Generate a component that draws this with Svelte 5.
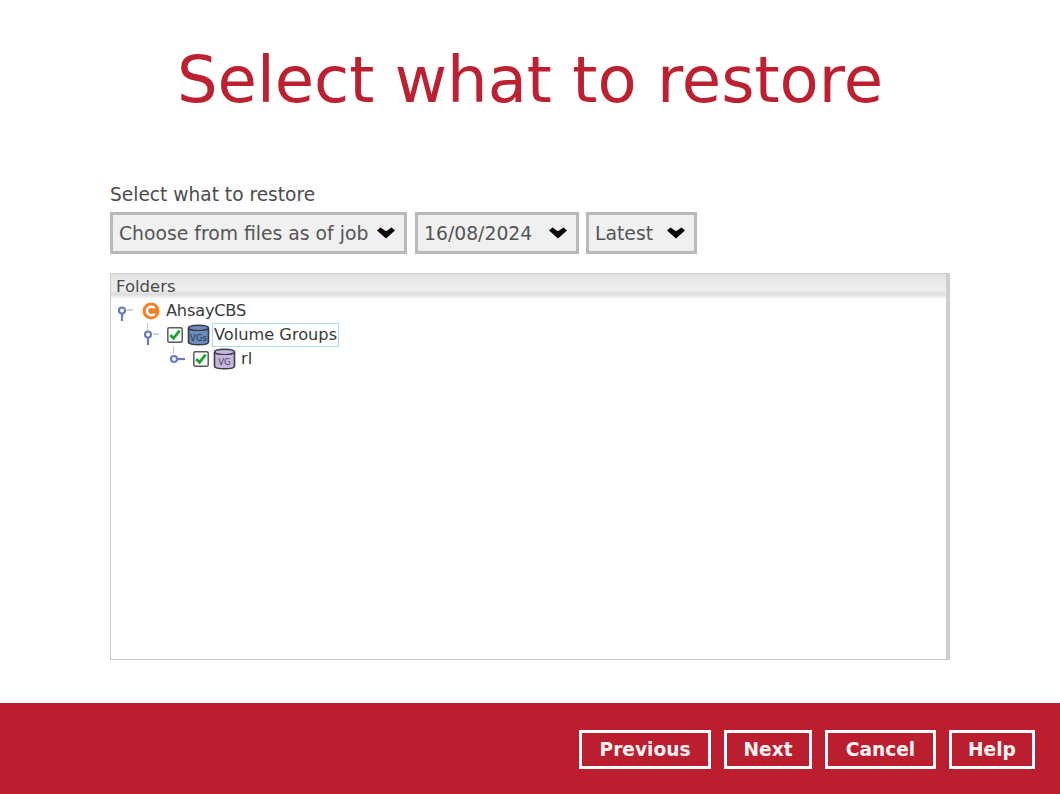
<script>
  const buttons = [
    { label: 'Previous', cls: 'prev' },
    { label: 'Next', cls: 'next' },
    { label: 'Cancel', cls: 'cancel' },
    { label: 'Help', cls: 'help' }
  ];
  const selects = [
    { label: 'Choose from files as of job', cls: 'job' },
    { label: '16/08/2024', cls: 'date' },
    { label: 'Latest', cls: 'latest' }
  ];
</script>

{#snippet pin(kind)}
  <svg class="pin" width="22" height="24" viewBox="0 0 22 24" aria-hidden="true">
    {#if kind !== 'root'}
      <path d="M5.500 -1V7" stroke="#c3c6cf" stroke-width="1.200" fill="none" />
    {/if}
    {#if kind === 'leaf'}
      <path d="M9 12h8" stroke="#6a7cc0" stroke-width="2.200" fill="none" />
      <circle cx="6" cy="12" r="3" fill="#fff" stroke="#6a7cc0" stroke-width="2.200" />
    {:else}
      <path d="M6 14v8" stroke="#6a7cc0" stroke-width="2.200" fill="none" />
      <path d="M11 11h6" stroke="#b9bcc6" stroke-width="1.300" fill="none" />
      <circle cx="6" cy="11.500" r="3" fill="#fff" stroke="#6a7cc0" stroke-width="2.200" />
    {/if}
  </svg>
{/snippet}

{#snippet check()}
  <svg class="check" width="16" height="16" viewBox="0 0 16 16" aria-hidden="true">
    <rect x="0.800" y="0.800" width="14.400" height="14.400" rx="1.500" fill="#fff" stroke="#5a5a5a" stroke-width="1.500" />
    <path d="M3.300 8l3.200 3.400L12.600 3.600" fill="none" stroke="#17a52f" stroke-width="2.800" />
  </svg>
{/snippet}

{#snippet drum(fill, label, ink)}
  <svg class="drum" width="23" height="22" viewBox="0 0 23 22" aria-hidden="true">
    <path d="M1.500 4c0-1.800 4.200-2.800 10-2.800s10 1 10 2.800v14c0 1.800-4.200 2.800-10 2.800s-10-1-10-2.800z" fill={fill} stroke="#3a3a48" stroke-width="1.600" />
    <path d="M1.500 4.500c1.500 1.500 5.200 2 10 2s8.500-.5 10-2" fill="none" stroke="#3a3a48" stroke-width="1.200" />
    <text x="11.500" y="16.500" text-anchor="middle" font-size="8.500" fill={ink}>{label}</text>
  </svg>
{/snippet}

<div class="page">
  <h1>Select what to restore</h1>

  <main class="content">
    <div class="label">Select what to restore</div>
    <div class="selects">
      {#each selects as s}
        <div class="select {s.cls}">
          <span class="value">{s.label}</span>
          <svg class="chevron" width="18" height="12" viewBox="0 0 18 12" aria-hidden="true">
            <path d="M0 3.500L3.500 0.500L9 4.200L14.500 0.500L18 3.500L9 11.500z" fill="#0a0a0a" />
          </svg>
        </div>
      {/each}
    </div>

    <section class="tree">
      <div class="tree-head">Folders</div>
      <div class="rows">
        <div class="row lvl0">
          {@render pin('root')}
          <svg class="brand" width="18" height="18" viewBox="0 0 18 18" aria-hidden="true">
            <circle cx="9" cy="9" r="8.500" fill="#f0822a" />
            <path d="M12.600 6.300a4.300 4.300 0 1 0 0 5.400" fill="none" stroke="#fff" stroke-width="2.400" />
          </svg>
          <span class="name">AhsayCBS</span>
        </div>
        <div class="row lvl1">
          {@render pin('branch')}
          {@render check()}
          {@render drum('#6a8cba', 'VGs', '#1f3150')}
          <span class="name focused">Volume Groups</span>
        </div>
        <div class="row lvl2">
          {@render pin('leaf')}
          {@render check()}
          {@render drum('#c5b7de', 'VG', '#4a4060')}
          <span class="name leaf">rl</span>
        </div>
      </div>
    </section>
  </main>

  <footer class="footer">
    {#each buttons as b}
      <button type="button" class="btn {b.cls}">{b.label}</button>
    {/each}
  </footer>
</div>

<style>
  :global(body) {
    margin: 0;
    background: #fff;
  }

  .page {
    height: 794px;
    display: flex;
    flex-direction: column;
    font-family: 'DejaVu Sans', sans-serif;
    color: #444;
  }

  h1 {
    margin: 0;
    padding-top: 41px;
    height: 144px;
    box-sizing: border-box;
    text-align: center;
    font-size: 64px;
    line-height: 78px;
    font-weight: 400;
    color: #bd2030;
  }

  .content {
    flex: 1;
    padding: 40px 110px 0;
  }

  .label {
    font-size: 18.600px;
    line-height: 22px;
    color: #4c4c4c;
  }

  .selects {
    display: flex;
    gap: 7px;
    margin-top: 6px;
  }

  .select {
    height: 42px;
    box-sizing: border-box;
    border: 3px solid #b9b9b9;
    background: #f0f0f0;
    display: flex;
    align-items: center;
    justify-content: space-between;
    padding: 0 9px 0 6px;
    font-size: 18.800px;
    color: #555;
  }

  .job { width: 297px; }
  .date { width: 164px; margin-left: 1px; }
  .latest { width: 111px; }

  .tree {
    height: 387px;
    box-sizing: border-box;
    margin-top: 19px;
    border: 1px solid #cbcbcb;
    border-right: 4px solid #cfcfcf;
  }

  .tree-head {
    height: 25px;
    padding-left: 5px;
    font-size: 16.500px;
    line-height: 26px;
    color: #4a4a4a;
    background: linear-gradient(#e4e4e4, #eeeeee 62%, #dddddd 82%, #fcfcfc);
  }

  .rows {
    font-size: 16.200px;
    color: #3a3a3a;
  }

  .row {
    height: 24px;
    display: flex;
    align-items: center;
  }

  .lvl0 { padding-left: 5px; }
  .lvl1 { padding-left: 31px; }
  .lvl2 { padding-left: 57px; }

  .pin { flex: none; }
  .brand { margin: 0 5px 0 4px; flex: none; }
  .check { margin-left: 3px; flex: none; }
  .drum { margin: 0 3px 0 4px; flex: none; }

  .name {
    line-height: 22px;
    padding: 0 1px;
  }

  .lvl0 .name { letter-spacing: -0.2px; }
  .leaf { margin-left: 1px; }

  .focused {
    outline: 1px solid #a9dcf2;
    outline-offset: 0;
  }

  .footer {
    height: 91px;
    background: #bb1e2e;
    display: flex;
    justify-content: flex-end;
    align-items: center;
    gap: 13px;
    padding: 2px 25px 0 0;
    box-sizing: border-box;
  }

  .btn {
    height: 39px;
    padding: 0;
    border: 3px solid #fff;
    background: transparent;
    color: #fdf3f3;
    font-family: 'DejaVu Sans', sans-serif;
    font-weight: 700;
    font-size: 18.600px;
  }

  .prev { width: 132px; }
  .next { width: 88px; }
  .cancel { width: 111px; }
  .help { width: 86px; }
</style>
